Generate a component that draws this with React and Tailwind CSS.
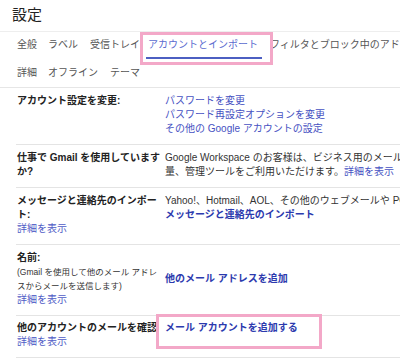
import React from "react";

const font = { fontFamily: '"Liberation Sans", "Noto Sans CJK JP", sans-serif' };

function Row({ left, right, alignRight = "items-start", pt = "pt-[6px]" }) {
  return (
    <div className={`ml-[16px] flex border-b border-[#e4e4e4] ${pt} pb-[8px] ${alignRight}`}>
      <div className="w-[141px] shrink-0 pl-[1px] whitespace-nowrap">{left}</div>
      <div className="ml-[8px] whitespace-nowrap">{right}</div>
    </div>
  );
}

export default function App() {
  return (
    <div
      className="w-[400px] h-[361px] overflow-hidden bg-white text-[10px] leading-[14px] text-[#222]"
      style={font}
    >
      {/* TITLE */}
      <div className="border-b border-[#eeeeee] pl-[12px] pt-[5px] pb-[6px] text-[15px] leading-[20px] text-[#222]">
        設定
      </div>

      {/* TABS */}
      <div className="border-b border-[#e6e6e6] pt-[6px] pb-[7px] whitespace-nowrap text-[#555]">
        <div className="flex items-start">
          <span className="ml-[17px]">全般</span>
          <span className="ml-[11px]">ラベル</span>
          <span className="ml-[12px]">受信トレイ</span>
          <span className="relative ml-[6px] border-b-2 border-[#4c5fc2] pl-[2px] pr-[4px] pb-[5px] text-[#5b6bcf]">
            アカウントとインポート
            <span className="pointer-events-none absolute -left-[6px] -top-[6px] h-[33px] w-[133px] border-[3px] border-[#f3a8c8]" />
          </span>
          <span className="ml-[8px]">フィルタとブロック中のアドレス</span>
          <span className="ml-[12px]">メール転送と POP/IMAP</span>
        </div>
        <div className="mt-[7px] flex items-start">
          <span className="ml-[17px]">詳細</span>
          <span className="ml-[11px]">オフライン</span>
          <span className="ml-[12px]">テーマ</span>
        </div>
      </div>

      {/* ACCOUNT SETTINGS */}
      <Row
        left={<div className="font-bold">アカウント設定を変更:</div>}
        right={
          <div className="text-[#4651c2]">
            <div>パスワードを変更</div>
            <div>パスワード再設定オプションを変更</div>
            <div>その他の Google アカウントの設定</div>
          </div>
        }
      />

      {/* WORKSPACE */}
      <Row
        left={
          <div className="font-bold">
            仕事で Gmail を使用しています
            <br />
            か?
          </div>
        }
        right={
          <div className="text-[#333]">
            <div>Google Workspace のお客様は、ビジネス用のメール、追加のストレージ容</div>
            <div>
              量、管理ツールをご利用いただけます。<span className="text-[#4651c2]">詳細を表示</span>
            </div>
          </div>
        }
      />

      {/* IMPORT */}
      <Row
        left={
          <div>
            <div className="font-bold">
              メッセージと連絡先のインポー
              <br />
              ト:
            </div>
            <div className="text-[#4f5bc6]">詳細を表示</div>
          </div>
        }
        right={
          <div>
            <div className="text-[#333]">
              Yahoo!、Hotmail、AOL、その他のウェブメールや POP3 アカウントからインポートします。
            </div>
            <div className="font-bold text-[#2c3aae]">メッセージと連絡先のインポート</div>
          </div>
        }
      />

      {/* NAME */}
      <Row
        alignRight="items-center"
        left={
          <div>
            <div className="font-bold">名前:</div>
            <div className="text-[8.5px] text-[#333]">
              (Gmail を使用して他のメール アドレ
              <br />
              スからメールを送信します)
            </div>
            <div className="text-[#4f5bc6]">詳細を表示</div>
          </div>
        }
        right={<div className="font-bold text-[#2c3aae]">他のメール アドレスを追加</div>}
      />

      {/* CHECK OTHER ACCOUNTS */}
      <Row
        pt="pt-[5px]"
        left={
          <div>
            <div className="font-bold">他のアカウントのメールを確認</div>
            <div className="text-[#4f5bc6]">詳細を表示</div>
          </div>
        }
        right={
          <span className="relative font-bold text-[#2c3aae]">
            メール アカウントを追加する
            <span className="pointer-events-none absolute -left-[9px] -top-[8px] h-[35px] w-[166px] border-[3px] border-[#f3a8c8]" />
          </span>
        }
      />
    </div>
  );
}
